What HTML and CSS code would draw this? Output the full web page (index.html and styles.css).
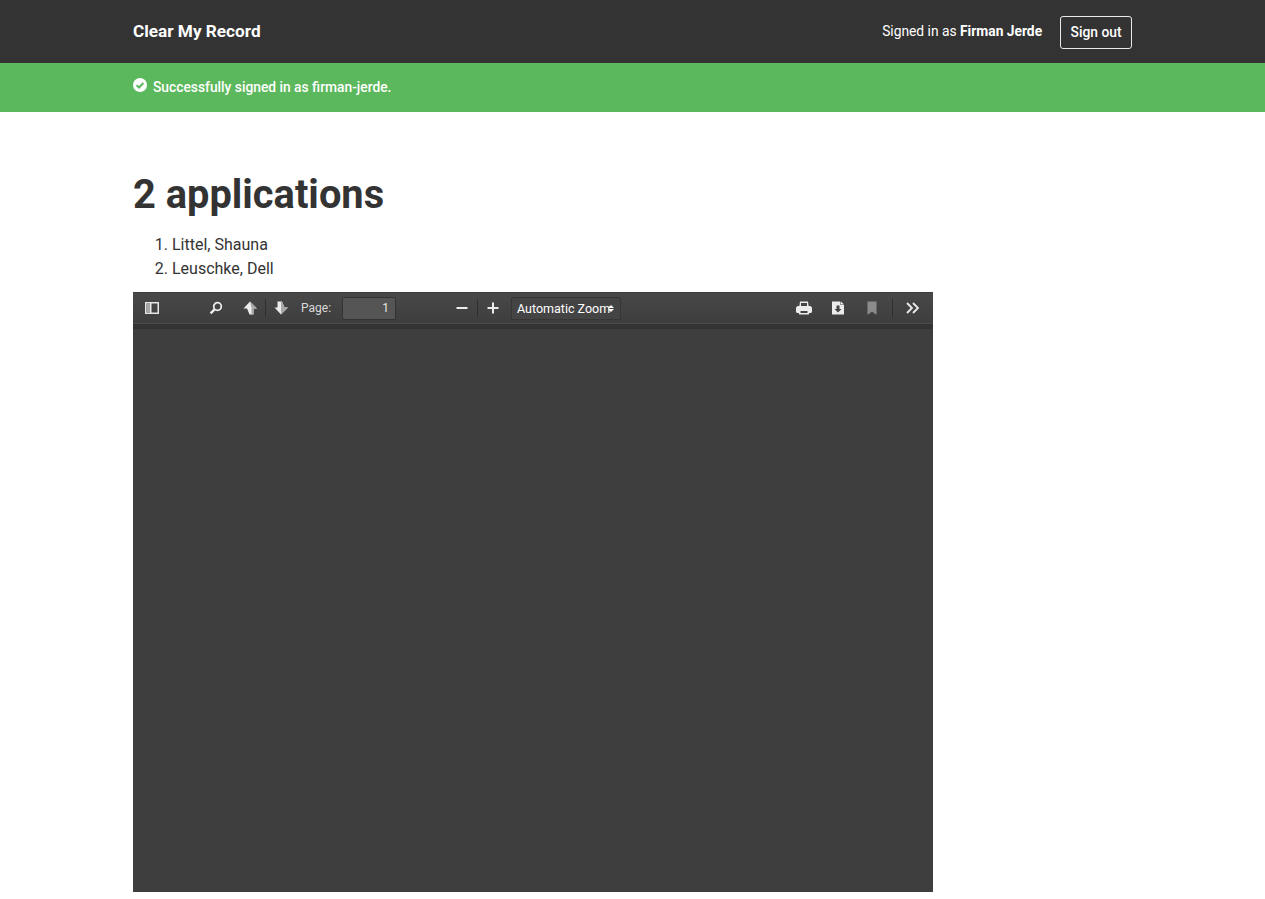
FILE: index.html
```html
<!DOCTYPE html>
<html lang="en">
<head>
    <meta charset="UTF-8">
    <title>Clear My Record</title>
    <link rel="stylesheet" href="styles.css">
</head>
<body>

    <!-- Top navigation -->
    <header class="topbar">
        <div class="wrap topbar-inner">
            <a class="brand" href="#">Clear My Record</a>
            <div class="account">
                <span class="signed-in">Signed in as <strong>Firman Jerde</strong></span>
                <a class="signout" href="#">Sign out</a>
            </div>
        </div>
    </header>

    <!-- Flash message -->
    <div class="flash">
        <div class="wrap flash-inner">
            <svg class="flash-icon" viewBox="0 0 14 14" width="14" height="14">
                <circle cx="7" cy="7" r="7" fill="#fff"/>
                <path d="M3.7 7.2 L6 9.5 L10.4 5" fill="none" stroke="#5cb85c" stroke-width="2"/>
            </svg>
            <span class="flash-text">Successfully signed in as firman-jerde.</span>
        </div>
    </div>

    <main class="wrap content">
        <h1>2 applications</h1>
        <ol class="applications">
            <li>Littel, Shauna</li>
            <li>Leuschke, Dell</li>
        </ol>

        <!-- PDF viewer -->
        <div class="viewer">
            <div class="toolbar">
                <div class="tools tools-left">
                    <svg class="tool tool-sidebar" viewBox="0 0 14 14" width="14" height="14">
                        <path fill="#e6e6e6" fill-rule="evenodd" d="M0 1H14V13H0ZM1.5 2.5V11.5H5V2.5ZM6.5 2.5V11.5H12.5V2.5Z"/>
                        <rect x="1.5" y="2.5" width="3.5" height="9" fill="#a8a8a8"/>
                    </svg>
                    <svg class="tool tool-search" viewBox="0 0 14 14" width="14" height="14">
                        <circle cx="8.5" cy="5.5" r="3.8" fill="none" stroke="#ececec" stroke-width="1.8"/>
                        <path d="M5.8 8.2 L1.6 12.4" stroke="#ececec" stroke-width="2.4"/>
                    </svg>
                    <svg class="tool tool-up" viewBox="0 0 16 16" width="16" height="16">
                        <path fill="#ececec" d="M8 1.5 L15 8.5 H11.5 V14.5 H7.5 L5 8.5 H1.5 Z"/>
                        <path fill="#a8a8a8" d="M8 1.5 L15 8.5 H11.5 V14.5 H9.5 V8 Z"/>
                    </svg>
                    <span class="split"></span>
                    <svg class="tool tool-down" viewBox="0 0 16 16" width="16" height="16">
                        <path fill="#ececec" d="M4.5 1.5 H9 L11.5 7.5 H15 L8 14.5 L1.5 7.5 H4.5 Z"/>
                        <path fill="#a8a8a8" d="M8 14.5 L15 7.5 H11.5 L9 1.5 H8 V8 Z"/>
                    </svg>
                    <span class="page-label">Page:</span>
                    <span class="page-input">1</span>
                </div>
                <div class="tools tools-middle">
                    <svg class="tool" viewBox="0 0 12 12" width="12" height="12">
                        <rect x="0.5" y="5" width="11" height="2" fill="#ececec"/>
                    </svg>
                    <span class="split split-zoom"></span>
                    <svg class="tool" viewBox="0 0 12 12" width="12" height="12">
                        <path fill="#ececec" d="M5 0.5H7V5H11.5V7H7V11.5H5V7H0.5V5H5Z"/>
                    </svg>
                    <span class="zoom-select">Automatic Zoom<span class="zoom-arrows"></span></span>
                </div>
                <div class="tools tools-right">
                    <svg class="tool" viewBox="0 0 16 14" width="16" height="14">
                        <path fill="#ececec" fill-rule="evenodd" d="M4 0.5H12L12.6 5H14.5L16 6.5V11L15 12H13V13.5H3V12H1L0 11V6.5L1.5 5H3.4ZM5 2V5H11V2ZM4.5 10V12H11.5V10Z"/>
                    </svg>
                    <svg class="tool tool-save" viewBox="0 0 14 14" width="14" height="14">
                        <path fill="#ececec" d="M1 0.5H9L9.5 1V4H13V13.5H1Z"/>
                        <path fill="#ececec" d="M10 0.5L13 3.4H10Z"/>
                        <path fill="#444" d="M5.5 4.5H8.5V8H10.5L7 11.5L3.5 8H5.5Z"/>
                    </svg>
                    <svg class="tool tool-bookmark" viewBox="0 0 10 14" width="10" height="14">
                        <path fill="#8c8c8c" d="M0.5 0.5H9.5V14L5 10.5L0.5 14Z"/>
                    </svg>
                    <span class="split split-more"></span>
                    <svg class="tool" viewBox="0 0 14 12" width="14" height="12">
                        <path fill="none" stroke="#ececec" stroke-width="1.8" d="M1 1L6 6L1 11M7 1L12 6L7 11"/>
                    </svg>
                </div>
            </div>
            <div class="toolbar-shadow"></div>
            <div class="canvas"></div>
        </div>
    </main>

</body>
</html>
```

FILE: styles.css
```css
body {
    margin: 0;
    font-family: Roboto, "Liberation Sans", sans-serif;
    font-size: 16px;
    line-height: 24px;
    color: #333;
    background: #fff;
}
a {
    color: inherit;
    text-decoration: none;
}
.wrap {
    width: 999px;
    margin-left: 133px;
}

/* top navigation */
.topbar {
    background: #333;
    color: #fff;
    height: 63px;
}
.topbar-inner {
    height: 100%;
    display: flex;
    align-items: center;
    justify-content: space-between;
}
.brand {
    font-size: 17.2px;
    font-weight: 700;
    margin-top: -1px;
}
.account {
    display: flex;
    align-items: center;
    gap: 18px;
}
.signed-in {
    font-size: 13.8px;
    margin-top: -2px;
}
.signout {
    font-size: 13.8px;
    font-weight: 500;
    line-height: 20px;
    padding: 5px 9.5px 6px;
    margin-top: 1px;
    border: 1px solid #e8e8e8;
    border-radius: 3px;
}

/* flash message */
.flash {
    background: #5cb85c;
    color: #fff;
    height: 49px;
}
.flash-inner {
    height: 100%;
    display: flex;
    align-items: center;
    gap: 6px;
    font-size: 13.8px;
    font-weight: 500;
}
.flash-icon {
    margin-top: -5px;
}
.flash-text {
    margin-top: -2px;
}

/* content */
.content {
    padding-top: 58px;
}
h1 {
    margin: 0;
    font-size: 39.8px;
    line-height: 50px;
    font-weight: 700;
}
.applications {
    margin: 13px 0 11px;
    padding-left: 39px;
    color: #333;
}

/* pdf viewer */
.viewer {
    width: 800px;
    height: 600px;
    display: flex;
    flex-direction: column;
    background: #3e3e3e;
}
.toolbar {
    height: 30px;
    flex: none;
    display: flex;
    align-items: center;
    background: linear-gradient(#484848, #3e3e3e);
    border-top: 1px solid #3a3a3a;
    font-size: 12px;
    color: #d9d9d9;
}
.toolbar-shadow {
    height: 5px;
    flex: none;
    background: #333;
    border-top: 1px solid #4a4a4a;
}
.canvas {
    flex: 1;
}
.tools {
    display: flex;
    align-items: center;
}
.tool {
    flex: none;
}
.tools-left {
    width: 263px;
    padding-left: 12px;
}
.tool-search {
    margin-left: 50px;
}
.tool-up {
    margin-left: 19px;
}
.split {
    width: 1px;
    height: 18px;
    background: #2f2f2f;
    margin: 0 7px 0 7px;
}
.page-label {
    margin-left: 12px;
}
.page-input {
    width: 46px;
    height: 21px;
    line-height: 21px;
    margin-left: 11px;
    padding-right: 6px;
    text-align: right;
    color: #e6e6e6;
    background: #555;
    border: 1px solid #333;
    border-radius: 2px;
}
.tools-middle {
    width: 167px;
    margin-left: 48px;
}
.split-zoom {
    margin: 0 9px;
}
.zoom-select {
    position: relative;
    width: 110px;
    height: 23px;
    line-height: 21px;
    margin-left: 12px;
    padding-left: 5px;
    box-sizing: border-box;
    flex: none;
    color: #fff;
    font-size: 12.5px;
    white-space: nowrap;
    overflow: hidden;
    background: #444;
    border: 1px solid #363636;
    border-radius: 2px;
}
.zoom-arrows::before,
.zoom-arrows::after {
    content: "";
    position: absolute;
    right: 6px;
    border-left: 3px solid transparent;
    border-right: 3px solid transparent;
}
.zoom-arrows::before {
    top: 7px;
    border-bottom: 3px solid #fff;
}
.zoom-arrows::after {
    top: 11px;
    border-top: 3px solid #fff;
}
.tools-right {
    margin-left: auto;
    padding-right: 13px;
}
.tool-save {
    margin-left: 19px;
}
.tool-bookmark {
    margin-left: 22px;
}
.split-more {
    margin: 0 13px 0 15px;
}
```
